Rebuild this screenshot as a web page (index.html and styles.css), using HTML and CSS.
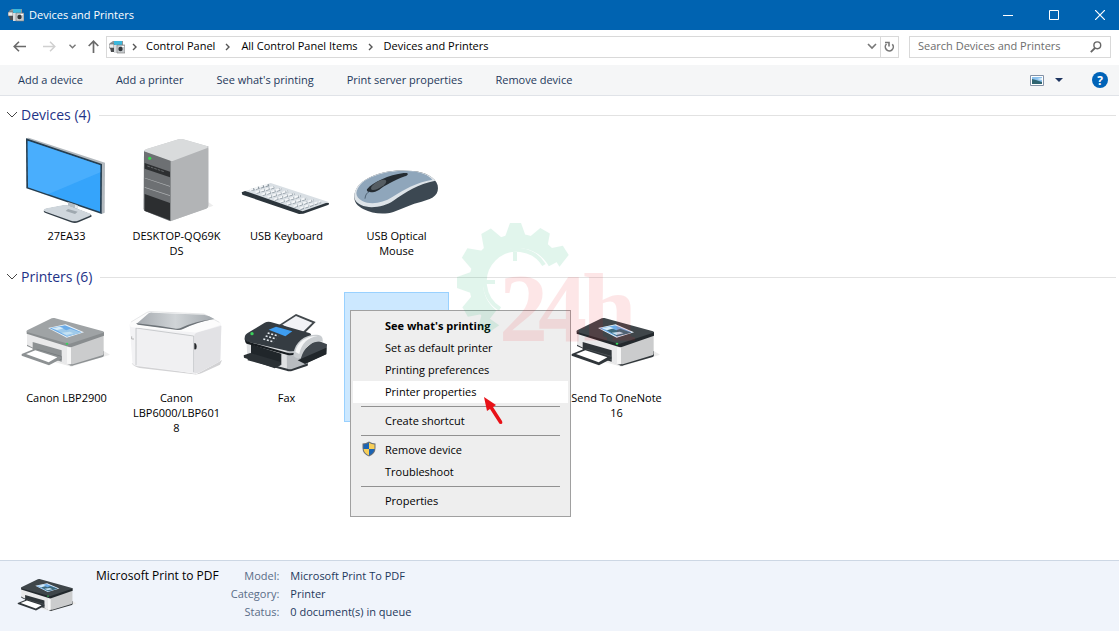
FILE: index.html
```html
<!DOCTYPE html>
<html lang="en">
  <head>
    <meta charset="UTF-8" />
    <meta name="viewport" content="width=device-width, initial-scale=1.0" />
    <title>Devices and Printers</title>
    <link rel="stylesheet" href="styles.css">
  </head>
  <body>
    <!-- shared icons -->
    <svg class="sprite" aria-hidden="true">
      <symbol id="cp-icon" viewBox="0 0 16 14">
        <path d="M1 3l3-2h10v4H1z" fill="#8d9498" />
        <path d="M5 1h8v4H5z" fill="#3cb8dc" />
        <path d="M0 4h5v4H0z" fill="#ececec" stroke="#5b5f62" stroke-width=".6" />
        <path d="M1 8h4v4H2z" fill="#4a4d50" />
        <path d="M5 5h3v8H5z" fill="#d9dcde" />
        <path d="M8 5h8v8H8z" fill="#c8cccf" stroke="#777" stroke-width=".6" />
        <circle cx="11.500" cy="9" r="2.200" fill="#33383c" />
        <path d="M13 6h2v1h-2z" fill="#fff" />
      </symbol>
      <symbol id="printer" viewBox="388 246 288 288">
        <path class="p-shadow" d="M440 440l105 30 116-36-20-12z" />
        <path class="p-base" d="M412 400v8l128 58q6 3 12 0l87-25q4-2 4-7v-10z" />
        <path class="p-front" d="M412 370l130 38v55l-10 1-120-60z" />
        <path class="p-side" d="M540 408l102-34v57q0 4-4 5l-86 26q-10 2-12-2z" />
        <path d="M532 407l12 3v53l-12-2z" fill="#f6f6f6" />
        <path class="p-slot" d="M429 396l87 25v34l-87-27z" />
        <path d="M440 416l76 22v13l-80-24z" fill="#666b6e" opacity=".6" />
        <path class="p-tray" d="M396 432l39-16 80 24v6l-37 20-82-29z" />
        <path d="M409 432l28-11 66 21-26 15z" fill="#fff" />
        <path class="p-rim" d="M411 362v9l127 40q4 1 8 0l97-34v-11z" />
        <path class="p-lid" d="M411 364q0-2 3-4l72-35q4-2 8-1l146 40q5 2 1 4l-96 32q-4 2-9 1l-122-34q-3-1-3-3z" />
        <path d="M475 354l53-11 55 24-52 16z" fill="#eaf3fa" />
        <path d="M480 355l46-9 50 21-44 13z" fill="#6aabe8" />
        <path d="M500 360l16-5 14 6 12-5 34 12-44 11z" class="p-hill" />
        <path d="M486 355l24-5 12 5-20 6z" fill="#d4ecfa" />
        <path d="M516 368l24-3 12 5-22 5z" fill="#c6e2f2" />
        <ellipse cx="532" cy="401" rx="4" ry="3" fill="#36d45a" />
      </symbol>
      <symbol id="chevron-down" viewBox="0 0 12 8">
        <path d="M1 1l5 5 5-5" fill="none" stroke="currentColor" />
      </symbol>
      <symbol id="chevron-right" viewBox="0 0 6 8">
        <path d="M1 1l3 3-3 3" fill="none" stroke="currentColor" stroke-width="1.400" />
      </symbol>
      <linearGradient id="glass">
        <stop offset="0" stop-color="#a4a9ae" />
        <stop offset=".5" stop-color="#d0d4d7" />
        <stop offset="1" stop-color="#a2a8ad" />
      </linearGradient>
    </svg>

    <header class="titlebar">
      <svg class="cp-icon"><use href="#cp-icon" /></svg>
      <h1>Devices and Printers</h1>
      <div class="window-buttons">
        <button type="button" aria-label="Minimize">
          <svg width="10" height="10"><path d="M0 5.500h10" stroke="#fff" /></svg>
        </button>
        <button type="button" aria-label="Maximize">
          <svg width="10" height="10"><path d="M.5.5h9v9h-9z" fill="none" stroke="#fff" /></svg>
        </button>
        <button type="button" aria-label="Close">
          <svg width="10" height="10"><path d="M0 0l10 10M10 0L0 10" stroke="#fff" stroke-width="1.200" /></svg>
        </button>
      </div>
    </header>

    <nav class="navbar">
      <button type="button" class="nav-btn" aria-label="Back">
        <svg width="13" height="11"><path d="M13 5.500H1M6 .7L1.200 5.500 6 10.300" fill="none" stroke="#6a6a6a" stroke-width="1.600" /></svg>
      </button>
      <button type="button" class="nav-btn" aria-label="Forward" disabled>
        <svg width="13" height="11"><path d="M0 5.500h12M7 .7l4.800 4.800L7 10.300" fill="none" stroke="#d0d0d0" stroke-width="1.500" /></svg>
      </button>
      <button type="button" class="nav-btn recent" aria-label="Recent locations">
        <svg width="7" height="5"><path d="M.5.7l3 3 3-3" fill="none" stroke="#777" stroke-width="1.400" /></svg>
      </button>
      <button type="button" class="nav-btn up" aria-label="Up">
        <svg width="11" height="13"><path d="M5.500 13V1M.7 6l4.800-4.800L10.300 6" fill="none" stroke="#6a6a6a" stroke-width="1.700" /></svg>
      </button>

      <div class="address">
        <svg class="cp-icon"><use href="#cp-icon" /></svg>
        <svg class="crumb-arrow"><use href="#chevron-right" /></svg>
        <a href="#">Control Panel</a>
        <svg class="crumb-arrow"><use href="#chevron-right" /></svg>
        <a href="#">All Control Panel Items</a>
        <svg class="crumb-arrow"><use href="#chevron-right" /></svg>
        <a href="#">Devices and Printers</a>
        <button type="button" class="address-drop" aria-label="Previous locations">
          <svg width="10" height="7"><path d="M1 1l4 4 4-4" fill="none" stroke="#777" stroke-width="1.600" /></svg>
        </button>
        <button type="button" class="refresh" aria-label="Refresh">
          <svg width="11" height="12"><path d="M2.500 3A4 4 0 1 0 8.300 3.200M1 1.500h4v4" fill="none" stroke="#777" stroke-width="1.600" /></svg>
        </button>
      </div>

      <form class="search">
        <input type="search" aria-label="Search Devices and Printers" placeholder="Search Devices and Printers" />
        <button type="button" aria-label="Search">
          <svg width="12" height="12"><path d="M5 7L.8 11.200" stroke="#666" stroke-width="1.800" /><circle cx="7.300" cy="4.300" r="3.400" fill="none" stroke="#666" stroke-width="1.400" /></svg>
        </button>
      </form>
    </nav>

    <div class="toolbar">
      <button type="button">Add a device</button>
      <button type="button">Add a printer</button>
      <button type="button">See what's printing</button>
      <button type="button">Print server properties</button>
      <button type="button">Remove device</button>
      <div class="toolbar-right">
        <button type="button" aria-label="Change view">
          <svg width="14" height="11">
            <path d="M.5.5h13v10H.5z" fill="#fff" stroke="#8492a6" />
            <path d="M2 2h10v7H2z" fill="#8cc2ee" />
            <path d="M2 4l4 1 6 2v2H2z" fill="#2f6470" />
            <path d="M7 4l5-1v2z" fill="#e8f5fc" />
          </svg>
        </button>
        <button type="button" class="view-more" aria-label="More options">
          <svg width="8" height="4"><path d="M0 0h8L4 4z" fill="#1e3560" /></svg>
        </button>
        <button type="button" class="help" aria-label="Help">?</button>
      </div>
    </div>

    <main>
      <section>
        <h2><svg class="group-arrow"><use href="#chevron-down" /></svg><span>Devices (4)</span></h2>
        <ul class="tiles">
          <li class="tile">
            <svg class="tile-icon" viewBox="28 0 288 288">
              <path d="M49 25l8-2 229 75-1 150-9 4z" fill="#b3b9be" />
              <path d="M49 25l228 77-1 150L50 175z" fill="#263e50" />
              <path d="M54 32l218 74-1 139L55 172z" fill="#35a4fb" />
              <path d="M54 32l218 74v21L115 193l-60-21z" fill="#59b6ff" opacity=".55" />
              <path d="M175 216l29 10v22h-29z" fill="#b7bec4" />
              <path d="M196 224l8 3v20h-8z" fill="#e6eaed" />
              <path d="M102 243q0-5 9-7l48-9q10-2 22 2l58 22q9 4 6 9l-39 17q-10 4-22 0l-76-28q-6-2-6-6z" fill="#323d46" />
              <path d="M102 241q0-4 9-6l48-9q10-2 22 2l58 22q9 4 0 8l-34 14q-10 4-21 0l-76-27q-6-2-6-4z" fill="#cfd6dc" />
              <path d="M175 237l29 8-8 7-28-9z" fill="#9fa8af" />
            </svg>
            <span>27EA33</span>
          </li>
          <li class="tile">
            <svg class="tile-icon" viewBox="357 0 288 288">
              <path d="M480 272l113-39 17-6-14-10z" fill="#ececec" />
              <path d="M402 66q0-5 6-8l98-30q7-2 13 0l71 20q5 2 5 8v170q0 6-6 9l-103 37q-5 2-9 0l-71-28q-5-2-5-8z" fill="#c5c7c9" />
              <path d="M482 94l113-46v179q0 6-6 9l-107 37z" fill="#b2b4b6" />
              <path d="M402 62l80 28v184l-76-30q-5-2-5-8z" fill="#6d7073" />
              <path d="M402 64q0-4 6-6l98-30q7-2 13 0l71 20q6 2 2 6l-102 38q-4 2-9 0z" fill="#d9dbdc" />
              <path d="M404 99l76 26v17l-76-26z" fill="#2d2f31" />
              <path d="M412 108l50 17" stroke="#66696b" stroke-width="3" stroke-dasharray="8 3" />
              <path d="M404 143l76 25v2l-76-25zM404 171l76 25v2l-76-25z" fill="#b0b3b5" />
              <path d="M404 192l76 27v52l-76-29z" fill="#2c2e30" />
              <circle cx="419" cy="85" r="5" fill="#33dd4d" />
            </svg>
            <span>DESKTOP-QQ69K<br>DS</span>
          </li>
          <li class="tile">
            <svg class="tile-icon" viewBox="28 0 288 288">
              <path d="M36 187l10-4 252 36-1 5-76 27-13 1L38 194z" fill="#2c353c" />
              <path d="M47 183l76-24 174 57-78 28z" fill="#d9dfe4" />
              <path d="M64 180l54-15M80 188l56-17M98 195l58-18M116 202l59-18M135 209l59-18M154 216l59-18M174 223l58-18M194 230l58-19M212 237l62-21" stroke="#8b969f" stroke-width="7" stroke-dasharray="11 4" />
              <path d="M60 180l56-17M78 187l56-17M96 194l58-18M114 201l59-18M133 208l59-18M152 215l59-18M172 222l58-18M192 229l58-19M211 235l62-21" stroke="#f4f6f8" stroke-width="6" stroke-dasharray="11 4" />
            </svg>
            <span>USB Keyboard</span>
          </li>
          <li class="tile">
            <svg class="tile-icon" viewBox="357 0 288 288">
              <path d="M373 199c2-24 14-40 44-56 38-20 82-25 132-20 36 3 67 18 74 43 5 26-10 40-48 49-31 7-56 20-85 31-28 9-64 5-89-8-20-10-29-22-28-39z" fill="#3c4852" />
              <path d="M373 196c2-22 14-38 44-53 38-20 82-25 132-20 29 3 55 13 67 29-52 10-89 34-126 60-26 18-70 26-97 13-15-7-21-16-20-29z" fill="#dde3e8" />
              <path d="M379 189c4-20 17-34 44-47 36-17 80-22 122-18 26 2 50 11 62 25-48 8-84 29-120 52-29 19-66 24-90 12-12-6-18-14-18-24z" fill="#8fa6bb" />
              <path d="M411 178c17-22 66-43 110-49 16-2 16 5 4 10-34 12-60 28-77 40-14 10-41 11-37-1z" fill="#252c32" />
              <path d="M426 168c10-12 26-20 37-19 11 2 5 12-6 20-13 9-25 13-32 10-3-2-2-7 1-11z" fill="#555d63" />
              <path d="M405 206c1-12 6-18 14-22" fill="none" stroke="#314252" stroke-width="2" />
            </svg>
            <span>USB Optical Mouse</span>
          </li>
        </ul>
      </section>

      <section>
        <h2><svg class="group-arrow"><use href="#chevron-down" /></svg><span>Printers (6)</span></h2>
        <ul class="tiles">
          <li class="tile">
            <svg class="tile-icon printer-gray"><use href="#printer" /></svg>
            <span>Canon LBP2900</span>
          </li>
          <li class="tile">
            <svg class="tile-icon" viewBox="28 -24 288 288">
              <path d="M36 190l195 32 76-42-6 14-56 26q-9 4-22 3L60 204q-16-3-24-14z" fill="#d2d2d4" />
              <path d="M30 76q0-8 6-11l46-27q7-4 15-3l156 7 45 24q7 5 7 14l-3 98q0 6-6 9l-56 30q-8 4-18 3L50 198q-11-2-12-13z" fill="#f3f3f5" />
              <path d="M224 104q4-6 14-8l67-19-3 101q0 6-6 9l-56 30q-8 4-16 3z" fill="#e2e2e5" />
              <path d="M50 84l172 24v110L52 196z" fill="#f0f0f2" />
              <path d="M49 196V84l173 24v109" fill="none" stroke="#b4b6b9" stroke-width="2" />
              <path d="M30 74q0-6 6-9l46-27q7-4 15-3l156 7 45 24q9 6 4 9-24 9-67 21-7 2-15 1L37 82q-7-1-7-8z" fill="#fcfcfc" />
              <path d="M34 66l48-29q7-3 15-2l156 7 46 25" fill="none" stroke="#b9bbbe" />
              <path d="M50 72l37-32q5-3 12-2l154 6q16 3 31 13-52 7-95 30-6 3-13 2z" fill="url(#glass)" />
              <path d="M50 70q60 6 119 16 8 1 14-2 44-21 101-27-52 9-96 31-6 3-14 2L55 74q-5-1-5-4z" fill="#6d7378" />
              <path d="M224 129q7 1 7 11t-7 8z" fill="#24272a" />
              <path d="M36 109v8h7" fill="none" stroke="#999" stroke-width="2" />
            </svg>
            <span>Canon LBP6000/LBP601<br>8</span>
          </li>
          <li class="tile">
            <svg class="tile-icon" viewBox="28 6 288 288">
              <path d="M149 104l50-32 59 24-45 46z" fill="#42484c" />
              <path d="M158 104l41-26 49 20-37 36z" fill="#f2f3f6" />
              <path d="M50 145l3 60 119 35q8 3 16 1l46-16 2-45z" fill="#dfe1e3" />
              <path d="M171 181l65-8-3 50-45 16q-8 2-16 0z" fill="#b8bcc0" />
              <path d="M54 205l119 31q8 3 16 0l46-16-1 7-45 15q-10 3-18 0L54 211z" fill="#30363b" />
              <path d="M64 163l91 28v34l-91-29z" fill="#20262a" />
              <path d="M42 196l20-7 91 27v10l-18 9-92-32z" fill="#2b3135" />
              <path d="M45 144q0-10 9-15l51-31q8-4 18-2l116 33q8 3 4 10l-43 40q-8 7-25 4L52 155q-8-2-7-11z" fill="#353c42" />
              <path d="M45 145q0 6 7 9l123 35q14 3 25-4l-4 7q-9 5-22 3L51 161q-5-2-6-16z" fill="#171c20" />
              <path d="M117 119l22-9 49 14-21 15z" fill="#3e9df0" />
              <path d="M114 129l32 9M108 138l32 9M101 147l32 9" stroke="#e6ebef" stroke-width="5" stroke-dasharray="6 5" />
              <circle cx="67" cy="131" r="5" fill="#3bd15b" />
              <path d="M200 199l58-50 34 14-2 29-60 27z" fill="#41484e" />
              <path d="M204 211l86-38v20l-64 29z" fill="#20262a" />
              <path d="M192 189c4-33 34-57 70-55 15 1 18 9 17 21-28-3-48 10-61 38l-5 13c-11 1-24-5-21-17z" fill="#c9cdd0" />
              <path d="M197 186c5-29 33-50 67-48-29 5-49 22-55 54z" fill="#f5f6f7" />
            </svg>
            <span>Fax</span>
          </li>
          <li class="tile selected" aria-label="Microsoft Print to PDF">
            <ul class="context-menu" role="menu">
              <li><button type="button" class="default">See what's printing</button></li>
              <li><button type="button">Set as default printer</button></li>
              <li><button type="button">Printing preferences</button></li>
              <li><button type="button" class="active">Printer properties</button></li>
              <li class="separator"></li>
              <li><button type="button">Create shortcut</button></li>
              <li class="separator"></li>
              <li>
                <button type="button">
                  <svg class="shield" viewBox="0 0 14 16">
                    <path d="M7 .5q3 2 6.500 2V7q0 6-6.500 8.500Q.5 13 .5 7V2.500Q4 2.500 7 .5z" fill="#6c7075" />
                    <path d="M7 1.800V8H1.500V3.500Q4.500 3.300 7 1.800zM7 8h5.400Q12 12.200 7 14.400z" fill="#1b64b4" />
                    <path d="M7 1.800V8h5.500V3.500Q9.500 3.300 7 1.800zM7 8H1.600Q2 12.200 7 14.400z" fill="#f8cf58" />
                  </svg>Remove device</button>
              </li>
              <li><button type="button">Troubleshoot</button></li>
              <li class="separator"></li>
              <li><button type="button">Properties</button></li>
            </ul>
          </li>
          <li class="tile"></li>
          <li class="tile">
            <svg class="tile-icon"><use href="#printer" /></svg>
            <span>Send To OneNote 16</span>
          </li>
        </ul>
      </section>

      <svg class="watermark" viewBox="0 0 190 130" aria-hidden="true">
        <g opacity=".12" fill="none" stroke="#10b068">
          <path d="M98 41A42 42 0 1 0 35 94" stroke-width="14" />
          <path d="M87 43A32 32 0 1 0 43 87" stroke-width="4" />
          <path d="M58 30v9M29 60h9" stroke-width="4" />
          <g fill="#10b068" stroke="none">
            <path id="tooth" d="M48 15l5-14h11l5 14z" />
            <use href="#tooth" transform="rotate(30 59 60)" />
            <use href="#tooth" transform="rotate(58 59 60)" />
            <use href="#tooth" transform="rotate(-30 59 60)" />
            <use href="#tooth" transform="rotate(-60 59 60)" />
            <use href="#tooth" transform="rotate(-90 59 60)" />
            <use href="#tooth" transform="rotate(-120 59 60)" />
            <use href="#tooth" transform="rotate(-145 59 60)" />
          </g>
        </g>
        <text class="watermark-text" x="42 81 125" y="119">24h</text>
      </svg>

      <svg class="pointer" viewBox="0 0 20 28" aria-hidden="true">
        <path d="M0 0l12 8-3 2 9 14q1 3-1 3t-2-1L6 12l-3 2z" fill="#e81218" />
      </svg>
    </main>

    <footer class="details">
      <svg class="details-icon" viewBox="0 24 288 243"><use href="#printer" width="288" height="288" /></svg>
      <strong>Microsoft Print to PDF</strong>
      <dl>
        <dt>Model:</dt>
        <dd>Microsoft Print To PDF</dd>
        <dt>Category:</dt>
        <dd>Printer</dd>
        <dt>Status:</dt>
        <dd>0 document(s) in queue</dd>
      </dl>
    </footer>
  </body>
</html>
```
FILE: styles.css
```css
* {
  box-sizing: border-box;
}

body {
  display: flex;
  flex-direction: column;
  height: 100vh;
  margin: 0;
  overflow: hidden;
  background: #fff;
  color: #000;
  font-family: "Segoe UI", "Open Sans", sans-serif;
  font-size: 11px;
  line-height: 15px;
}

h1,
h2,
ul,
dl,
dd {
  margin: 0;
  padding: 0;
  font-weight: normal;
}

ul {
  list-style: none;
}

button {
  padding: 0;
  border: none;
  background: none;
  color: inherit;
  font: inherit;
}

button svg {
  display: block;
}

a {
  padding-bottom: 2px;
  color: inherit;
  text-decoration: none;
}

.sprite {
  position: absolute;
  width: 0;
  height: 0;
}

.cp-icon {
  flex: none;
  width: 16px;
  height: 14px;
}

/* title bar */
.titlebar {
  display: flex;
  align-items: center;
  gap: 5px;
  height: 30px;
  flex: none;
  padding: 0 0 0 8px;
  background: #0063b1;
  color: #fff;
}

.titlebar h1 {
  padding-bottom: 2px;
  font-size: 11px;
}

.window-buttons {
  display: flex;
  gap: 8px;
  height: 28px;
  margin-left: auto;
}

.window-buttons button {
  display: flex;
  align-items: center;
  justify-content: center;
  width: 38px;
}

/* navigation */
.navbar {
  display: flex;
  align-items: center;
  flex: none;
  height: 35px;
  padding: 0 8px 2px 4px;
}

.nav-btn {
  display: flex;
  align-items: center;
  justify-content: center;
  width: 30px;
  height: 22px;
}

.nav-btn.recent {
  width: 16px;
}

.nav-btn.up {
  width: 26px;
}

.address {
  display: flex;
  align-items: center;
  flex: 1;
  height: 22px;
  padding-left: 2px;
  border: 1px solid #d9d9d9;
}

.crumb-arrow {
  width: 6px;
  height: 8px;
  margin: 0 10px;
  color: #555;
}

.cp-icon + .crumb-arrow {
  margin: 0 8px 0 7px;
}

.address-drop {
  margin-left: auto;
  padding: 0 3px;
}

.refresh {
  display: flex;
  align-items: center;
  justify-content: center;
  width: 18px;
  height: 20px;
  border-left: 1px solid #d9d9d9;
}

.search {
  display: flex;
  align-items: center;
  width: 202px;
  height: 22px;
  margin-left: 10px;
  padding: 0 8px;
  border: 1px solid #d9d9d9;
}

.search input {
  flex: 1;
  min-width: 0;
  padding: 0 0 2px;
  border: none;
  outline: none;
  background: none;
  font: inherit;
}

.search input::placeholder {
  color: #6d6d6d;
}

/* command bar */
.toolbar {
  display: flex;
  align-items: center;
  flex: none;
  gap: 33px;
  height: 31px;
  padding: 0 11px 0 18px;
  border-bottom: 1px solid #e0e3e8;
  background: #f5f6f7;
  color: #1e395b;
}

.toolbar > button {
  padding-bottom: 2px;
}

.toolbar-right {
  display: flex;
  align-items: center;
  gap: 11px;
  margin-left: auto;
}

.toolbar-right .help {
  width: 16px;
  height: 16px;
  margin-left: 18px;
  border-radius: 50%;
  background: #0063b8;
  color: #fff;
  font-size: 12px;
  font-weight: bold;
}

/* device list */
main {
  position: relative;
  flex: 1;
  min-height: 0;
  padding-top: 4px;
}

h2 {
  display: flex;
  align-items: center;
  height: 30px;
  padding: 0 3px 0 6px;
  color: #1e3287;
  font-size: 14px;
}

h2 span {
  padding-bottom: 2px;
}

h2::after {
  content: "";
  flex: 1;
  height: 1px;
  margin-left: 8px;
  background: #e2e2e2;
}

.group-arrow {
  width: 12px;
  height: 8px;
  margin-right: 3px;
  color: #444;
}

.tiles {
  display: flex;
  flex-wrap: wrap;
  align-items: flex-start;
  gap: 5px;
  padding: 0 14px 2px;
}

.tile {
  position: relative;
  display: flex;
  flex-direction: column;
  align-items: center;
  width: 105px;
  min-height: 130px;
  text-align: center;
}

.tile span {
  width: 94px;
}

.tile.selected {
  border: 1px solid #99d1ff;
  background: #cce8ff;
}

.tile-icon {
  width: 96px;
  height: 96px;
  margin-bottom: 2px;
}

.p-shadow {
  fill: #ececec;
}

.p-base,
.p-slot,
.p-tray {
  fill: var(--printer-trim, #30363a);
}

.p-front {
  fill: #e9e9ea;
}

.p-side {
  fill: #cbcccd;
}

.p-rim {
  fill: var(--printer-rim, #23292d);
}

.p-lid {
  fill: var(--printer-lid, #3f464a);
}

.p-hill {
  fill: var(--printer-hill, #3f6a7c);
}

.printer-gray {
  --printer-trim: #8d9193;
  --printer-rim: #898d8f;
  --printer-lid: #9fa3a5;
  --printer-hill: #9fcaea;
}

/* context menu */
.context-menu {
  position: absolute;
  top: 17px;
  left: 5px;
  z-index: 1;
  width: 221px;
  padding: 4px 2px;
  border: 1px solid #a0a0a0;
  background: #eee;
  text-align: left;
}

.context-menu button {
  display: flex;
  align-items: center;
  width: 100%;
  height: 22px;
  padding: 0 0 2px 32px;
}

.context-menu .default {
  font-weight: bold;
}

.context-menu .active {
  background: #fff;
}

.separator {
  height: 1px;
  margin: 3px 8px;
  background: #919191;
}

.shield {
  width: 14px;
  height: 16px;
  margin: 0 9px 0 -23px;
}

.watermark {
  position: absolute;
  top: 126px;
  left: 457px;
  z-index: 2;
  width: 190px;
  height: 130px;
  pointer-events: none;
}

.watermark-text {
  fill: #f01820;
  font-family: "Liberation Serif", serif;
  font-size: 98px;
  font-weight: bold;
  opacity: 0.1;
}

.pointer {
  position: absolute;
  top: 301px;
  left: 484px;
  z-index: 3;
  width: 20px;
  height: 28px;
  pointer-events: none;
}

/* details pane */
.details {
  display: flex;
  align-items: flex-start;
  flex: none;
  padding: 6px 16px 10px;
  border-top: 1px solid #cdd7e4;
  background: #f0f4fb;
  line-height: 18px;
}

.details-icon {
  width: 64px;
  height: 54px;
  margin-right: 16px;
}

.details strong {
  font-size: 12px;
  font-weight: normal;
}

.details dl {
  display: grid;
  grid-template-columns: auto auto;
  column-gap: 11px;
  margin-left: 12px;
  color: #1e395b;
}

.details dt {
  color: #5a6c87;
  text-align: right;
}
```
